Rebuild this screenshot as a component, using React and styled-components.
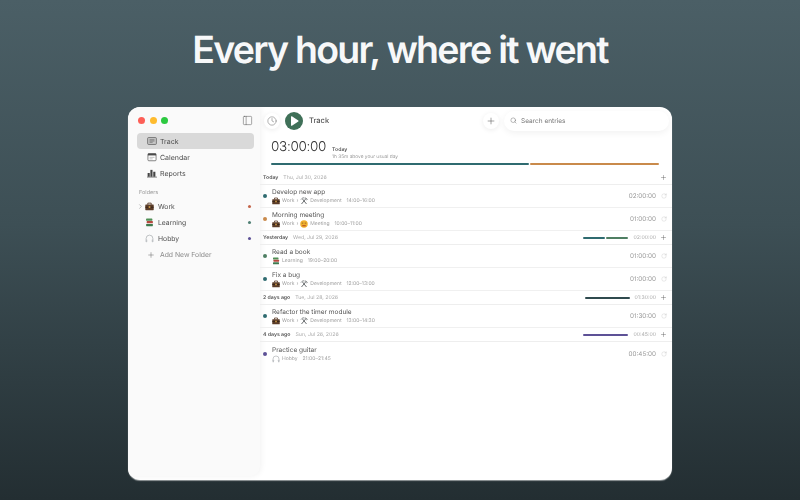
import styled, { createGlobalStyle } from "styled-components";
import { Plus, Search, Clock, ChevronRight, RotateCw, PanelLeft } from "lucide-react";

const GlobalStyle = createGlobalStyle`
  html, body {
    margin: 0;
    height: 100%;
  }
  body {
    font-family: Inter, "Liberation Sans", sans-serif;
    text-rendering: geometricPrecision;
  }
  * {
    box-sizing: border-box;
  }
`;

const TEAL = "#2f6b70";
const ORANGE = "#c98a4b";
const GREEN = "#4f7f63";
const PURPLE = "#5d5196";
const DARK = "#2f4a4e";

const Briefcase = ({ size = 8 }) => (
  <svg width={size} height={size} viewBox="0 0 16 16">
    <path d="M5 5V2h6v3" fill="none" stroke="#5a3b26" strokeWidth="1.6" />
    <rect x="0.5" y="4.5" width="15" height="10" rx="1" fill="#5b3c28" />
    <rect x="0.5" y="8.5" width="15" height="1.4" fill="#2c1c12" />
    <rect x="6.5" y="7.5" width="3" height="3" fill="#d8a24a" />
  </svg>
);

const Books = ({ size = 8 }) => (
  <svg width={size} height={size} viewBox="0 0 16 16">
    <rect x="2" y="1" width="11" height="4" rx="1" fill="#4f8f55" />
    <rect x="3" y="5.5" width="11" height="4" rx="1" fill="#b5483f" />
    <rect x="2" y="10.5" width="12" height="4" rx="1" fill="#3f7a4f" />
  </svg>
);

const Headphones = ({ size = 8 }) => (
  <svg width={size} height={size} viewBox="0 0 16 16" fill="none">
    <path d="M2 10V8a6 6 0 0 1 12 0v2" stroke="#a4a8ab" strokeWidth="1.2" />
    <rect x="1" y="9.500" width="3" height="5" rx="1.2" fill="#c0c3c6" />
    <rect x="12" y="9.500" width="3" height="5" rx="1.2" fill="#c0c3c6" />
  </svg>
);

const Tools = ({ size = 8 }) => (
  <svg width={size} height={size} viewBox="0 0 16 16" fill="none">
    <path d="M3 14L12 3M13 14L5 4" stroke="#55595c" strokeWidth="1.7" />
    <path d="M2 5c2-3 5-4 7-3M10 1.5l4.5 3-1.5 2" stroke="#6d7174" strokeWidth="1.7" />
  </svg>
);

const Face = ({ size = 8 }) => (
  <svg width={size} height={size} viewBox="0 0 16 16">
    <circle cx="8" cy="8" r="7.5" fill="#f0b02e" />
    <rect x="3.5" y="5.500" width="3" height="1.3" fill="#6b4a14" />
    <rect x="9.5" y="5.500" width="3" height="1.3" fill="#6b4a14" />
    <path d="M4.5 10.5h7v2h-7z" fill="#b5451f" />
  </svg>
);

const TrackIcon = () => (
  <svg width="10" height="10" viewBox="0 0 16 16" fill="none">
    <rect x="1" y="2.5" width="14" height="11" rx="1.5" fill="#c6c6c6" stroke="#5c5c5c" strokeWidth="1.2" />
    <path d="M4 6h8M4 8h8M4 10h5" stroke="#5c5c5c" strokeWidth="1" />
  </svg>
);

const CalendarIcon = () => (
  <svg width="10" height="10" viewBox="0 0 16 16" fill="none">
    <rect x="1.5" y="2.5" width="13" height="11.5" rx="1.5" fill="#fff" stroke="#5c5c5c" strokeWidth="1.2" />
    <rect x="1.5" y="2.5" width="13" height="3" fill="#4a4a4a" />
    <path d="M4 8.5h8M4 11h5" stroke="#9a9a9a" strokeWidth="1" />
  </svg>
);

const ReportsIcon = () => (
  <svg width="10" height="10" viewBox="0 0 16 16">
    <rect x="1" y="8" width="3.4" height="6" fill="#444" />
    <rect x="5.4" y="3" width="3.4" height="11" fill="#444" />
    <rect x="10" y="6" width="3.4" height="8" fill="#444" />
    <rect x="0" y="14" width="16" height="1" fill="#444" />
  </svg>
);

const navItems = [
  { label: "Track", icon: <TrackIcon />, active: true },
  { label: "Calendar", icon: <CalendarIcon /> },
  { label: "Reports", icon: <ReportsIcon /> },
];

const folders = [
  { label: "Work", icon: <Briefcase size={9} />, color: "#c4654a", chevron: true },
  { label: "Learning", icon: <Books size={9} />, color: "#4f7f73" },
  { label: "Hobby", icon: <Headphones size={9} />, color: PURPLE },
];

const groups = [
  {
    title: "Today",
    date: "Thu, Jul 30, 2026",
    entries: [
      { name: "Develop new app", color: TEAL, folder: <Briefcase />, folderName: "Work", tag: <Tools />, tagName: "Development", range: "14:00–16:00", total: "02:00:00" },
      { name: "Morning meeting", color: ORANGE, folder: <Briefcase />, folderName: "Work", tag: <Face />, tagName: "Meeting", range: "10:00–11:00", total: "01:00:00" },
    ],
  },
  {
    title: "Yesterday",
    date: "Wed, Jul 29, 2026",
    total: "02:00:00",
    bars: [TEAL, GREEN],
    entries: [
      { name: "Read a book", color: GREEN, folder: <Books />, folderName: "Learning", range: "19:00–20:00", total: "01:00:00" },
      { name: "Fix a bug", color: TEAL, folder: <Briefcase />, folderName: "Work", tag: <Tools />, tagName: "Development", range: "12:00–13:00", total: "01:00:00" },
    ],
  },
  {
    title: "2 days ago",
    date: "Tue, Jul 28, 2026",
    total: "01:30:00",
    bars: [DARK],
    entries: [
      { name: "Refactor the timer module", color: TEAL, folder: <Briefcase />, folderName: "Work", tag: <Tools />, tagName: "Development", range: "13:00–14:30", total: "01:30:00" },
    ],
  },
  {
    title: "4 days ago",
    date: "Sun, Jul 26, 2026",
    total: "00:45:00",
    bars: [PURPLE],
    entries: [
      { name: "Practice guitar", color: PURPLE, folder: <Headphones />, folderName: "Hobby", range: "21:00–21:45", total: "00:45:00" },
    ],
  },
];

export default function App() {
  return (
    <Page>
      <GlobalStyle />
      <Headline>Every hour, where it went</Headline>
      <Window>
        <Sidebar>
          <TitleBar>
            <Lights>
              <Light color="#fd5f57" />
              <Light color="#febb2e" />
              <Light color="#2cc940" />
            </Lights>
            <PanelLeft size={11} strokeWidth={1.1} color="#555" />
          </TitleBar>
          <Nav>
            {navItems.map((item) => (
              <NavItem key={item.label} $active={item.active}>
                {item.icon}
                {item.label}
              </NavItem>
            ))}
          </Nav>
          <SectionLabel>Folders</SectionLabel>
          <FolderList>
            {folders.map((f) => (
              <FolderRow key={f.label}>
                <Chevron>{f.chevron && <ChevronRight size={7} strokeWidth={1.5} />}</Chevron>
                {f.icon}
                <FolderName>{f.label}</FolderName>
                <Dot $size={3} color={f.color} />
              </FolderRow>
            ))}
            <AddFolder>
              <Plus size={8} strokeWidth={1.5} color="#666" />
              Add New Folder
            </AddFolder>
          </FolderList>
        </Sidebar>
        <Main>
          <Toolbar>
            <RoundButton>
              <Clock size={10} strokeWidth={1.2} color="#666" />
            </RoundButton>
            <PlayButton>
              <svg width="9" height="10" viewBox="0 0 9 10">
                <path d="M1 .8v8.4c0 .5.5.8.9.5l6.4-4.2c.4-.3.4-.8 0-1L1.900.300C1.500 0 1 .300 1 .8z" fill="#fff" />
              </svg>
            </PlayButton>
            <ToolbarTitle>Track</ToolbarTitle>
            <RoundButton $push>
              <Plus size={10} strokeWidth={1.3} color="#555" />
            </RoundButton>
            <SearchBox>
              <Search size={7} strokeWidth={1.5} color="#666" />
              Search entries
            </SearchBox>
          </Toolbar>
          <Summary>
            <BigTime>03:00:00</BigTime>
            <SummaryText>
              <SummaryTitle>Today</SummaryTitle>
              <SummaryNote>1h 35m above your usual day</SummaryNote>
            </SummaryText>
          </Summary>
          <DayBar>
            <BarPart color={TEAL} $grow={2} />
            <BarPart color={ORANGE} $grow={1} />
          </DayBar>
          {groups.map((g) => (
            <section key={g.title}>
              <GroupHeader>
                <GroupTitle>{g.title}</GroupTitle>
                <GroupDate>{g.date}</GroupDate>
                {g.bars && (
                  <MiniBar>
                    {g.bars.map((c) => (
                      <BarPart key={c} color={c} $grow={1} />
                    ))}
                  </MiniBar>
                )}
                {g.total && <GroupTotal>{g.total}</GroupTotal>}
                <GroupPlus>
                  <Plus size={7} strokeWidth={1.4} color="#555" />
                </GroupPlus>
              </GroupHeader>
              {g.entries.map((e) => (
                <EntryRow key={e.name}>
                  <Dot $size={4} color={e.color} />
                  <EntryBody>
                    <EntryName>{e.name}</EntryName>
                    <EntryMeta>
                      {e.folder}
                      <span>{e.folderName}</span>
                      {e.tag && (
                        <>
                          <span>›</span>
                          {e.tag}
                          <span>{e.tagName}</span>
                        </>
                      )}
                      <EntryRange>{e.range}</EntryRange>
                    </EntryMeta>
                  </EntryBody>
                  <EntryTotal>{e.total}</EntryTotal>
                  <RotateCw size={6} strokeWidth={1.2} color="#b5b5b5" />
                </EntryRow>
              ))}
            </section>
          ))}
        </Main>
      </Window>
    </Page>
  );
}

const Page = styled.div`
  width: 800px;
  height: 500px;
  overflow: hidden;
  display: flex;
  flex-direction: column;
  align-items: center;
  background: linear-gradient(180deg, #4b5f66 0%, #3d4f55 45%, #232e32 100%);
`;

const Headline = styled.h1`
  margin: 27px 0 0;
  height: 48px;
  font-size: 37.5px;
  line-height: 48px;
  font-weight: 600;
  letter-spacing: -1.75px;
  color: #f7f8f9;
`;

const Window = styled.div`
  margin-top: 32px;
  width: 544px;
  height: 373px;
  display: flex;
  overflow: hidden;
  border-radius: 12px;
  background: #fff;
  filter: blur(0.25px);
  box-shadow: 0 1px 1px rgba(255, 255, 255, 0.5);
`;

const Sidebar = styled.aside`
  width: 132px;
  height: 369px;
  flex-shrink: 0;
  padding: 0 6px 0 9px;
  background: #fafafa;
  border-bottom-right-radius: 10px;
  box-shadow: 1px 0 6px rgba(0, 0, 0, 0.06);
`;

const TitleBar = styled.div`
  height: 26px;
  padding: 1px 1px 0 1px;
  display: flex;
  align-items: center;
  justify-content: space-between;
`;

const Lights = styled.div`
  display: flex;
  gap: 4.6px;
`;

const Light = styled.span`
  width: 7px;
  height: 7px;
  border-radius: 50%;
  background: ${(p) => p.color};
`;

const Nav = styled.nav`
  display: flex;
  flex-direction: column;
`;

const NavItem = styled.div`
  height: 16.2px;
  padding-left: 10px;
  display: flex;
  align-items: center;
  gap: 3px;
  font-size: 7px;
  color: #4a4a4a;
  border-radius: 4px;
  background: ${(p) => (p.$active ? "#d9d9d9" : "transparent")};
`;

const SectionLabel = styled.div`
  margin: 7px 0 0 2px;
  height: 9px;
  font-size: 5.5px;
  line-height: 9px;
  color: #999;
`;

const FolderList = styled.div`
  margin-top: 1px;
  display: flex;
  flex-direction: column;
`;

const FolderRow = styled.div`
  height: 16px;
  display: flex;
  align-items: center;
  font-size: 6.8px;
  color: #4f4f4f;
`;

const Chevron = styled.span`
  width: 7px;
  margin-right: 1px;
  display: flex;
  justify-content: center;
  color: #666;
`;

const FolderName = styled.span`
  flex: 1;
  margin-left: 4px;
`;

const AddFolder = styled.div`
  height: 16px;
  padding-left: 10px;
  display: flex;
  align-items: center;
  gap: 5px;
  font-size: 6.8px;
  color: #8a8a8a;
`;

const Dot = styled.span`
  width: ${(p) => p.$size}px;
  height: ${(p) => p.$size}px;
  margin-right: ${(p) => (p.$size === 3 ? "3px" : "0")};
  flex-shrink: 0;
  border-radius: 50%;
  background: ${(p) => p.color};
`;

const Main = styled.main`
  flex: 1;
  min-width: 0;
  display: flex;
  flex-direction: column;
`;

const Toolbar = styled.div`
  height: 26px;
  padding: 1px 3px 0 4px;
  display: flex;
  align-items: center;
`;

const RoundButton = styled.div`
  width: 16px;
  height: 16px;
  margin-left: ${(p) => (p.$push ? "auto" : "0")};
  flex-shrink: 0;
  display: flex;
  align-items: center;
  justify-content: center;
  border-radius: 50%;
  background: #fff;
  box-shadow: 0 1px 5px rgba(0, 0, 0, 0.08);
`;

const PlayButton = styled.div`
  width: 18px;
  height: 18px;
  margin-left: 5px;
  display: flex;
  align-items: center;
  justify-content: center;
  border-radius: 50%;
  background: #3f7058;
`;

const ToolbarTitle = styled.div`
  margin-left: 6px;
  font-size: 7.5px;
  font-weight: 500;
  color: #555;
`;

const SearchBox = styled.div`
  width: 165px;
  height: 20px;
  margin-left: 5px;
  padding-left: 6px;
  display: flex;
  align-items: center;
  gap: 4px;
  font-size: 6.5px;
  color: #777;
  border-radius: 10px;
  background: #fff;
  box-shadow: 0 2px 7px rgba(0, 0, 0, 0.06);
`;

const Summary = styled.div`
  margin: 4px 0 0 11px;
  height: 20px;
  display: flex;
  align-items: flex-end;
  gap: 6px;
`;

const BigTime = styled.div`
  font-size: 13.5px;
  line-height: 20px;
  font-weight: 300;
  letter-spacing: -0.3px;
  color: #333;
`;

const SummaryText = styled.div`
  margin-bottom: -3px;
  display: flex;
  flex-direction: column;
`;

const SummaryTitle = styled.div`
  font-size: 5.2px;
  line-height: 7px;
  font-weight: 500;
  color: #444;
`;

const SummaryNote = styled.div`
  font-size: 4.8px;
  line-height: 6px;
  color: #999;
`;

const DayBar = styled.div`
  margin: 6px 13px 6px 11px;
  height: 2px;
  display: flex;
  gap: 1px;
`;

const BarPart = styled.div`
  flex: ${(p) => p.$grow};
  background: ${(p) => p.color};
  border-radius: 1px;
`;

const GroupHeader = styled.div`
  height: 14px;
  padding: 0 5px 0 3px;
  display: flex;
  align-items: center;
  font-size: 5.2px;
  border-bottom: 1px solid #eeeeee;
`;

const GroupTitle = styled.span`
  font-weight: 600;
  color: #555;
`;

const GroupDate = styled.span`
  margin-left: 5px;
  flex: 1;
  color: #aaa;
`;

const MiniBar = styled.div`
  width: 45px;
  height: 2px;
  display: flex;
  gap: 1px;
`;

const GroupTotal = styled.span`
  margin-left: 5px;
  color: #aaa;
`;

const GroupPlus = styled.span`
  margin-left: 4px;
  display: flex;
`;

const EntryRow = styled.div`
  height: 23px;
  padding: 0 5px 0 3px;
  display: flex;
  align-items: center;
  border-bottom: 1px solid #f0f0f0;

  section:last-of-type &:last-child {
    border-bottom: none;
  }
`;

const EntryBody = styled.div`
  flex: 1;
  margin-left: 5px;
  padding-top: 1px;
  min-width: 0;
`;

const EntryName = styled.div`
  font-size: 6.5px;
  line-height: 9px;
  color: #555;
`;

const EntryMeta = styled.div`
  display: flex;
  align-items: center;
  gap: 2px;
  font-size: 5px;
  line-height: 8px;
  color: #a0a0a0;
`;

const EntryRange = styled.span`
  margin-left: 3px;
`;

const EntryTotal = styled.div`
  margin-right: 5px;
  font-size: 6.3px;
  color: #999;
`;
